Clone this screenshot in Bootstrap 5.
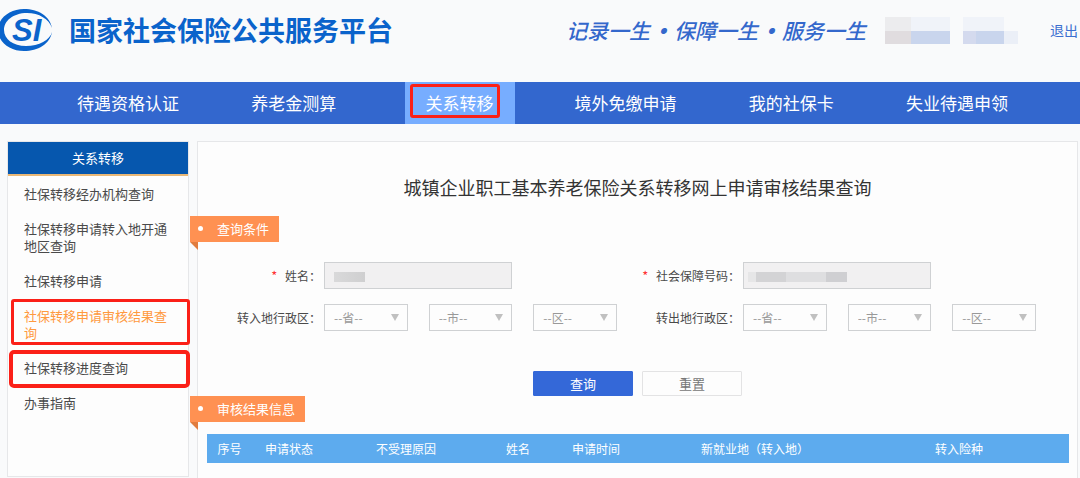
<!DOCTYPE html>
<html lang="zh-CN">
<head>
<meta charset="utf-8">
<meta name="viewport" content="width=device-width, initial-scale=1">
<title>国家社会保险公共服务平台</title>
<link href="https://cdn.jsdelivr.net/npm/bootstrap@5.3.0/dist/css/bootstrap.min.css" rel="stylesheet">
<style>
  body { font-family: "Noto Sans CJK SC", sans-serif; font-size: 13px; line-height: 17px; color: #4a4a4a; background: #f9fafb; }
  a { text-decoration: none; }

  /* header */
  .site-head { height: 60px; margin-bottom: 22px; }
  .site-logo { width: 54px; height: 44px; margin-right: 15px; }
  .site-name { font-size: 27px; line-height: 36px; font-weight: 700; color: #0a63cb; }
  .slogan { font-size: 21px; line-height: 28px; font-style: italic; font-weight: 500; color: #3468cc; }
  .slogan i { display: inline-block; width: 24px; text-align: center; font-weight: 900; }
  .masked { display: grid; grid-template: 14px 13px / repeat(7, 13px) repeat(3, 14px); margin: 0 32px 0 19px; }
  .masked b:nth-child(1), .masked b:nth-child(2) { background: #ececee; }
  .masked b:nth-child(n+3) { background: #f0f3f9; }
  .masked b:nth-child(6), .masked b:nth-child(16), .masked b:nth-child(10) { background: none; }
  .masked b:nth-child(11), .masked b:nth-child(12) { background: #e0dcdf; }
  .masked b:nth-child(13), .masked b:nth-child(14), .masked b:nth-child(15), .masked b:nth-child(18), .masked b:nth-child(19) { background: #c9d5ed; }
  .masked b:nth-child(17) { background: #d4daee; }
  .masked b:nth-child(20) { background: #ebeff7; }
  .logout { font-size: 14px; color: #3c6fd0; margin-right: 2px; }

  /* main navigation */
  .main-nav { background: #3367ce; padding: 0 40px 0 45px; margin-bottom: 17px; }
  .main-nav a { font-size: 17px; line-height: 42px; color: #fff; padding: 0 21px; display: inline-block; }
  .main-nav a.active { background: #77adff; }
  .marked { position: relative; }
  .marked::after { content: ""; position: absolute; inset: 2px 15px 6px 5px; border: 3px solid #fb2018; border-radius: 3px; pointer-events: none; }

  /* two-column body */
  .page-body { padding: 0 2px 0 7px; }
  .side { width: 182px; background: #fdfdfd; border: 1px solid #e6e7e9; margin-bottom: 1px; }
  .side h2 { font-size: 13px; line-height: 32px; color: #fff; background: #0657ae; border-bottom: 2px solid #e9b877; margin: 0; font-weight: 400; }
  .side a { display: block; padding: 9px 15px 9px 16px; color: #4a4a4a; }
  .side a.current { color: #ff9a3f; }
  .side .marked::after { inset: 1px -2px 5px 3px; }
  .side .marked.strong::after { inset: 0 -2px -3px 1px; border-width: 4px; border-radius: 5px; }

  /* content panel */
  .panel { background: #fdfdfd; border: 1px solid #e6e7e9; border-bottom: 0; min-width: 0; }
  .panel h1 { font-size: 18px; line-height: 26px; margin: 32px 0 16px; color: #333; font-weight: 400; }
  .ribbon { position: relative; display: table; font-size: 13px; font-weight: 400; line-height: 26px; margin: 0 0 0 -8px; padding: 0 10px 0 27px; color: #fff; background: #ff9152; }
  .ribbon::before { content: ""; position: absolute; left: 8px; top: 10px; width: 5px; height: 5px; border-radius: 50%; background: #fff; }
  .ribbon::after { content: ""; position: absolute; left: 0; top: 100%; border-style: solid; border-width: 0 8px 8px 0; border-color: transparent #e07c3e transparent transparent; }
  .query { padding: 20px 41px 0 0; }
  .field { display: grid; grid-template-columns: 123px 1fr; column-gap: 3px; align-items: center; margin-bottom: 15px; }
  .field > label { font-size: 12px; text-align: right; white-space: nowrap; }
  .field sup { color: #f33; font-size: 13px; top: 0; margin-right: 5px; }
  .controls { display: grid; grid-template-columns: repeat(3, 1fr); column-gap: 21px; }
  .controls .form-control, .controls .form-select { height: 27px; min-height: 0; border: 1px solid #cfd1d3; border-radius: 0; font-size: 12px; line-height: 17px; padding: 4px 9px; }
  .controls .form-control { background: #f1f0f1; }
  .controls .form-select { color: #999; background: #fdfdfd url("data:image/svg+xml,%3Csvg xmlns='http://www.w3.org/2000/svg' viewBox='0 0 8 7'%3E%3Cpath d='M0 0h8L4 7z' fill='%23c0c0c0'/%3E%3C/svg%3E") no-repeat right 8px center / 8px 7px; }
  .input-box { position: relative; grid-column: span 2; }
  .blur-name, .blur-code { position: absolute; top: 10px; height: 10px; }
  .blur-name { left: 10px; width: 31px; background: linear-gradient(90deg, #d9d9da, #cfcfd0); }
  .blur-code { left: 5px; width: 99px; background: linear-gradient(90deg, #e6e6e7 8px, #d3d3d5 8px 38px, #dedee0 38px 78px, #cfcfd2 78px); }
  .actions { gap: 9px; margin: 25px 0 0; }
  .actions .btn { width: 100px; height: 25px; padding: 0; border-radius: 1px; font-size: 13px; line-height: 23px; }
  .btn-query { background: #3468d8; border-color: #3468d8; color: #fff; }
  .btn-reset { background: #fdfdfd; border-color: #e3e3e4; color: #777; }
  .result { background: #5dabee; margin: 12px 8px 0 9px; padding-right: 19px; }
  .result table { table-layout: fixed; width: 100%; }
  .result th { font-size: 12px; line-height: 17px; padding: 6px 0; font-weight: 400; color: #fff; text-align: center; white-space: nowrap; }
</style>
</head>
<body>
<div class="d-flex flex-column min-vh-100">

  <header class="site-head d-flex align-items-center">
    <svg class="site-logo" viewBox="0 0 54 44" role="img" aria-label="SI">
      <path fill="#0a63cb" fill-rule="evenodd" d="M24 1C38 1 50 8 52 20C49 11 39 5 27 5C13 5 4 13 4 22C4 31 13 38 26 38C39 38 50 32 52 24C50 36 38 43 24 43C10 43-2 34-2 22C-2 10 10 1 24 1Z"/>
      <text x="12" y="33" font-family="Liberation Sans, sans-serif" font-size="31" font-weight="700" font-style="italic" fill="#0a63cb">SI</text>
    </svg>
    <div class="site-name text-nowrap">国家社会保险公共服务平台</div>
    <div class="slogan text-nowrap ms-auto">记录一生<i>·</i>保障一生<i>·</i>服务一生</div>
    <div class="masked flex-shrink-0" aria-hidden="true"><b></b><b></b><b></b><b></b><b></b><b></b><b></b><b></b><b></b><b></b><b></b><b></b><b></b><b></b><b></b><b></b><b></b><b></b><b></b><b></b></div>
    <a href="#" class="logout text-nowrap">退出</a>
  </header>

  <nav class="main-nav">
    <ul class="list-unstyled row g-0 row-cols-6 text-center text-nowrap mb-0">
      <li class="col"><a href="#">待遇资格认证</a></li>
      <li class="col"><a href="#">养老金测算</a></li>
      <li class="col"><a href="#" class="active marked" aria-current="page">关系转移</a></li>
      <li class="col"><a href="#">境外免缴申请</a></li>
      <li class="col"><a href="#">我的社保卡</a></li>
      <li class="col"><a href="#">失业待遇申领</a></li>
    </ul>
  </nav>

  <div class="page-body d-flex flex-fill gap-2">
    <aside class="side flex-shrink-0">
      <h2 class="text-center">关系转移</h2>
      <ul class="list-unstyled mb-0">
        <li><a href="#">社保转移经办机构查询</a></li>
        <li><a href="#">社保转移申请转入地开通地区查询</a></li>
        <li><a href="#">社保转移申请</a></li>
        <li><a href="#" class="current marked">社保转移申请审核结果查询</a></li>
        <li><a href="#" class="marked strong">社保转移进度查询</a></li>
        <li><a href="#">办事指南</a></li>
      </ul>
    </aside>

    <main class="panel flex-fill">
      <h1 class="text-center">城镇企业职工基本养老保险关系转移网上申请审核结果查询</h1>

      <h2 class="ribbon">查询条件</h2>
      <form>
        <div class="query row g-0">
          <div class="col-6">
            <div class="field">
              <label for="name"><sup>*</sup> 姓名：</label>
              <div class="controls"><div class="input-box"><input id="name" class="form-control" type="text" readonly><span class="blur-name"></span></div></div>
            </div>
            <div class="field">
              <label for="in-prov">转入地行政区：</label>
              <div class="controls">
                <select id="in-prov" class="form-select"><option>--省--</option></select>
                <select class="form-select" aria-label="转入地市"><option>--市--</option></select>
                <select class="form-select" aria-label="转入地区"><option>--区--</option></select>
              </div>
            </div>
          </div>
          <div class="col-6">
            <div class="field">
              <label for="code"><sup>*</sup> 社会保障号码：</label>
              <div class="controls"><div class="input-box"><input id="code" class="form-control" type="text" readonly><span class="blur-code"></span></div></div>
            </div>
            <div class="field">
              <label for="out-prov">转出地行政区：</label>
              <div class="controls">
                <select id="out-prov" class="form-select"><option>--省--</option></select>
                <select class="form-select" aria-label="转出地市"><option>--市--</option></select>
                <select class="form-select" aria-label="转出地区"><option>--区--</option></select>
              </div>
            </div>
          </div>
        </div>
        <div class="actions d-flex justify-content-center">
          <button type="button" class="btn btn-query">查询</button>
          <button type="reset" class="btn btn-reset">重置</button>
        </div>
      </form>

      <h2 class="ribbon">审核结果信息</h2>
      <div class="result">
        <table>
          <colgroup>
            <col style="width:45px"><col style="width:74px"><col style="width:160px"><col style="width:64px"><col style="width:92px"><col style="width:226px"><col style="width:182px">
          </colgroup>
          <thead>
            <tr><th scope="col">序号</th><th scope="col">申请状态</th><th scope="col">不受理原因</th><th scope="col">姓名</th><th scope="col">申请时间</th><th scope="col">新就业地（转入地）</th><th scope="col">转入险种</th></tr>
          </thead>
        </table>
      </div>
    </main>
  </div>
</div>
<script src="https://cdn.jsdelivr.net/npm/bootstrap@5.3.0/dist/js/bootstrap.bundle.min.js"></script>
</body>
</html>
